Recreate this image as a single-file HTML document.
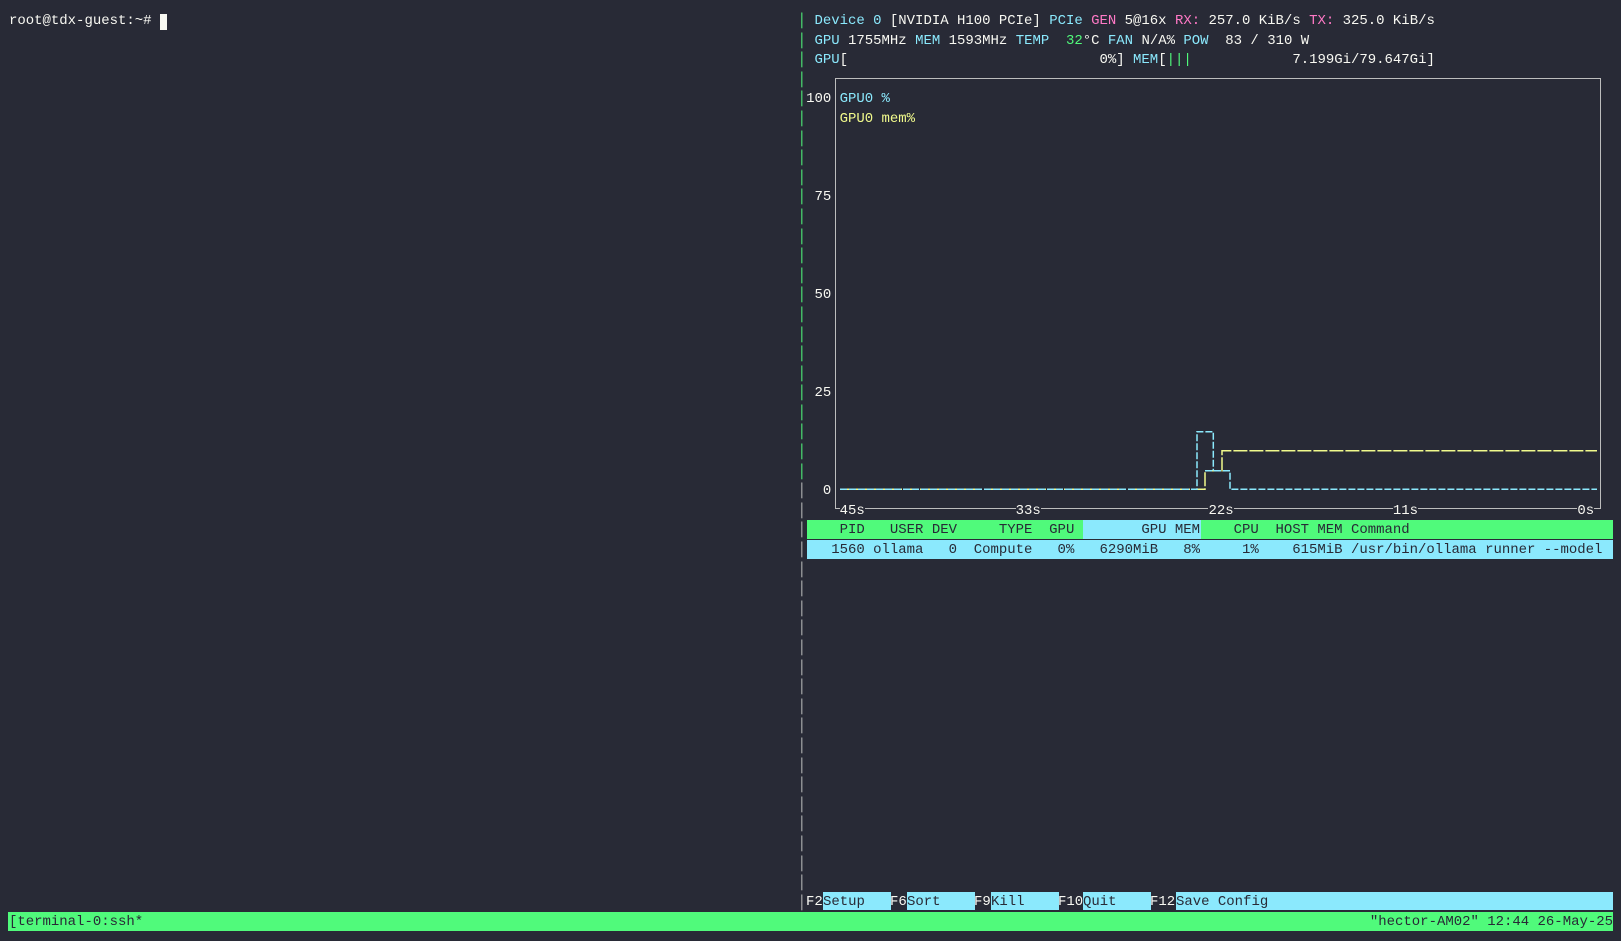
<!DOCTYPE html>
<html><head><meta charset="utf-8"><style>
html,body{margin:0;padding:0;background:#282a36;width:1621px;height:941px;overflow:hidden;position:relative}
pre{margin:0;position:absolute;font-family:"Liberation Mono",monospace;font-size:13.98px;line-height:19.6px;color:#f8f8f2;white-space:pre}
.c{color:#8be9fd}.p{color:#ff79c6}.g{color:#50fa7b}.y{color:#f1fa8c}.s{color:#bdbdbd}.d{color:#282a36}
.bg{position:absolute}
.lab{background:#282a36}
</style></head><body>
<pre style="left:9px;top:12px">root@tdx-guest:~# </pre>
<div class="bg" style="left:160px;top:14px;width:7px;height:16px;background:#f8f8f2"></div>

<!-- graph box -->
<div class="bg" style="left:835px;top:78px;width:766px;height:431px;border:1px solid #bdbdbd;box-sizing:border-box"></div>

<!-- table backgrounds -->
<div class="bg" style="left:807px;top:520px;width:806px;height:19px;background:#50fa7b"></div>
<div class="bg" style="left:1083px;top:520px;width:118px;height:19px;background:#8be9fd"></div>
<div class="bg" style="left:807px;top:539.5px;width:806px;height:19px;background:#8be9fd"></div>

<!-- function key bar -->
<div class="bg" style="left:823px;top:892px;width:68px;height:18px;background:#8be9fd"></div>
<div class="bg" style="left:907px;top:892px;width:68px;height:18px;background:#8be9fd"></div>
<div class="bg" style="left:991px;top:892px;width:68px;height:18px;background:#8be9fd"></div>
<div class="bg" style="left:1083px;top:892px;width:68px;height:18px;background:#8be9fd"></div>
<div class="bg" style="left:1176px;top:892px;width:437px;height:18px;background:#8be9fd"></div>
<pre style="left:806px;top:893px">F2</pre>
<pre class="d" style="left:823px;top:893px">Setup</pre>
<pre style="left:890px;top:893px">F6</pre>
<pre class="d" style="left:907px;top:893px">Sort</pre>
<pre style="left:974px;top:893px">F9</pre>
<pre class="d" style="left:991px;top:893px">Kill</pre>
<pre style="left:1058px;top:893px">F10</pre>
<pre class="d" style="left:1083px;top:893px">Quit</pre>
<pre style="left:1150px;top:893px">F12</pre>
<pre class="d" style="left:1176px;top:893px">Save Config</pre>

<!-- status bar -->
<div class="bg" style="left:8px;top:912px;width:1605px;height:18.5px;background:#50fa7b"></div>
<pre class="d" style="left:9px;top:913px">[terminal-0:ssh*</pre>
<pre class="d" style="right:8px;top:913px">"hector-AM02" 12:44 26-May-25</pre>

<!-- graph lines -->
<svg class="bg" style="left:0;top:0" width="1621" height="941">
<g fill="none" stroke-width="1.5">
<path d="M840 489.3 H1205 V470.7 H1222 V450.7 H1597" stroke="#f1fa8c" stroke-dasharray="14 2"/>
<path d="M840 489.3 H1197 V431.7 H1213.3 V470.7 M1205 470.7 H1230 V489.3 H1597" stroke="#8be9fd" stroke-dasharray="7 2"/>
</g>
</svg>

<pre style="left:797.7px;top:12px"><span class="g">│</span> <span class="c">Device 0</span> [NVIDIA H100 PCIe] <span class="c">PCIe</span> <span class="p">GEN</span> 5@16x <span class="p">RX:</span> 257.0 KiB/s <span class="p">TX:</span> 325.0 KiB/s
<span class="g">│</span> <span class="c">GPU</span> 1755MHz <span class="c">MEM</span> 1593MHz <span class="c">TEMP</span>  <span class="g">32</span>°C <span class="c">FAN</span> N/A% <span class="c">POW</span>  83 / 310 W
<span class="g">│</span> <span class="c">GPU</span>[                              0%] <span class="c">MEM</span>[<span class="g">|||</span>            7.199Gi/79.647Gi]
<span class="g">│</span>
<span class="g">│</span>100 <span class="c">GPU0 %</span>
<span class="g">│</span>    <span class="y">GPU0 mem%</span>
<span class="g">│</span>
<span class="g">│</span>
<span class="g">│</span>
<span class="g">│</span> 75
<span class="g">│</span>
<span class="g">│</span>
<span class="g">│</span>
<span class="g">│</span>
<span class="g">│</span> 50
<span class="g">│</span>
<span class="g">│</span>
<span class="g">│</span>
<span class="g">│</span>
<span class="g">│</span> 25
<span class="g">│</span>
<span class="g">│</span>
<span class="g">│</span>
<span class="g">│</span>
<span class="s">│</span>  0
<span class="s">│</span>    <span class="lab">45s</span>                  <span class="lab">33s</span>                    <span class="lab">22s</span>                   <span class="lab">11s</span>                   <span class="lab">0s</span>
<span class="s">│</span><span class="d">    PID   USER DEV     TYPE  GPU        GPU MEM    CPU  HOST MEM Command</span>
<span class="s">│</span><span class="d">   1560 ollama   0  Compute   0%   6290MiB   8%     1%    615MiB /usr/bin/ollama runner --model</span>
<span class="s">│</span>
<span class="s">│</span>
<span class="s">│</span>
<span class="s">│</span>
<span class="s">│</span>
<span class="s">│</span>
<span class="s">│</span>
<span class="s">│</span>
<span class="s">│</span>
<span class="s">│</span>
<span class="s">│</span>
<span class="s">│</span>
<span class="s">│</span>
<span class="s">│</span>
<span class="s">│</span>
<span class="s">│</span>
<span class="s">│</span>
<span class="s">│</span></pre>
</body></html>
